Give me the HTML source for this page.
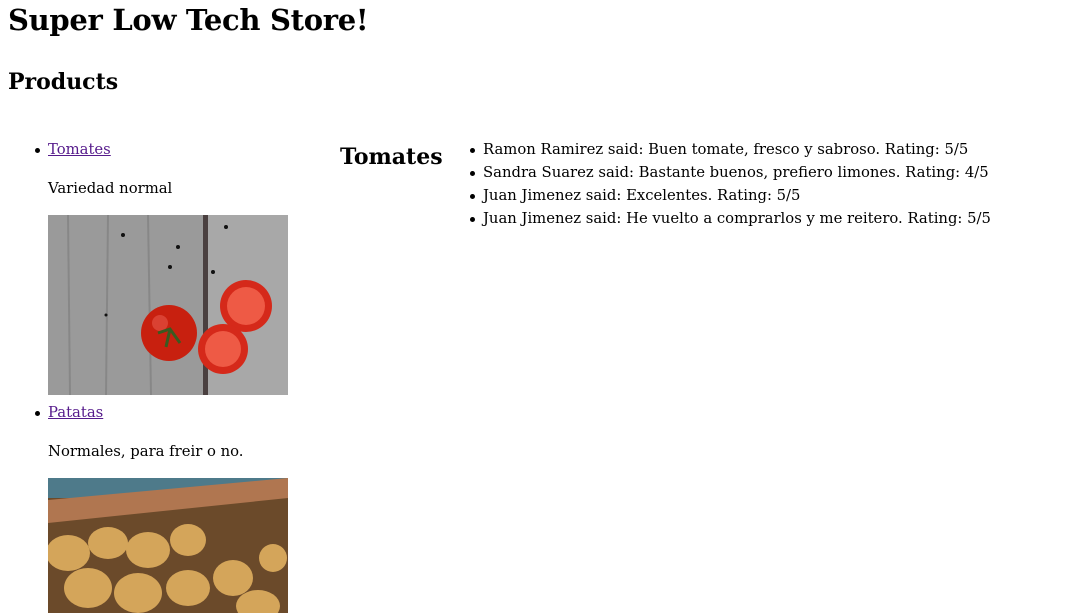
<!DOCTYPE html>
<html><head><meta charset="utf-8"><style>
body{margin:0;width:1083px;height:613px;overflow:hidden;background:#fff;font-family:"DejaVu Serif","Liberation Serif",serif;color:#000;position:relative}
.a{position:absolute;white-space:nowrap}
h1,h2{margin:0;font-weight:bold}
.t{font-size:14.8px;line-height:23px}
a{color:#551a8b;text-decoration:underline}
.b{position:absolute;width:5px;height:5px;border-radius:50%;background:#000}
</style></head><body>
<h1 class="a" style="left:8px;top:3px;font-size:29px;letter-spacing:-0.3px">Super Low Tech Store!</h1>
<h2 class="a" style="left:8px;top:69px;font-size:22px">Products</h2>

<div class="b" style="left:35px;top:148px"></div>
<div class="a t" style="left:48px;top:138px"><a>Tomates</a></div>
<div class="a t" style="left:48px;top:177px">Variedad normal</div>
<svg class="a" style="left:48px;top:215px" width="240" height="180">
<rect width="240" height="180" fill="#9a9a9a"/>
<g stroke="#7c7c7c" stroke-width="2" opacity=".6"><line x1="20" y1="0" x2="22" y2="180"/><line x1="60" y1="0" x2="58" y2="180"/><line x1="100" y1="0" x2="103" y2="180"/><line x1="190" y1="0" x2="188" y2="180"/></g>
<rect x="155" y="0" width="5" height="180" fill="#4a4040"/>
<rect x="160" y="0" width="80" height="180" fill="#a8a8a8"/>
<g fill="#111"><circle cx="75" cy="20" r="2"/><circle cx="130" cy="32" r="2"/><circle cx="178" cy="12" r="2"/><circle cx="122" cy="52" r="2"/><circle cx="58" cy="100" r="1.5"/><circle cx="165" cy="57" r="2"/></g>
<circle cx="121" cy="118" r="28" fill="#c8200f"/>
<circle cx="112" cy="108" r="8" fill="#e6584a" opacity=".6"/>
<path d="M110 118 l12 -4 l10 14 M122 114 l-4 18" stroke="#3a5a20" stroke-width="3" fill="none"/>
<circle cx="198" cy="91" r="26" fill="#d5291a"/><circle cx="198" cy="91" r="19" fill="#ee5a45"/>
<circle cx="175" cy="134" r="25" fill="#d5291a"/><circle cx="175" cy="134" r="18" fill="#ee5a45"/>
</svg>

<div class="b" style="left:35px;top:411px"></div>
<div class="a t" style="left:48px;top:401px"><a>Patatas</a></div>
<div class="a t" style="left:48px;top:440px">Normales, para freir o no.</div>
<svg class="a" style="left:48px;top:478px" width="240" height="135">
<rect width="240" height="135" fill="#6b4a2a"/>
<rect width="240" height="20" fill="#4e7a8a"/>
<path d="M0 22 L240 0 L240 20 L0 45Z" fill="#b07650"/>
<g fill="#d4a55a"><ellipse cx="20" cy="75" rx="22" ry="18"/><ellipse cx="60" cy="65" rx="20" ry="16"/><ellipse cx="100" cy="72" rx="22" ry="18"/><ellipse cx="140" cy="62" rx="18" ry="16"/><ellipse cx="40" cy="110" rx="24" ry="20"/><ellipse cx="90" cy="115" rx="24" ry="20"/><ellipse cx="140" cy="110" rx="22" ry="18"/><ellipse cx="185" cy="100" rx="20" ry="18"/><ellipse cx="210" cy="128" rx="22" ry="16"/><ellipse cx="225" cy="80" rx="14" ry="14"/></g>
</svg>

<h2 class="a" style="left:340px;top:144px;font-size:22px">Tomates</h2>
<div class="b" style="left:470px;top:148px"></div>
<div class="b" style="left:470px;top:171px"></div>
<div class="b" style="left:470px;top:194px"></div>
<div class="b" style="left:470px;top:217px"></div>
<div class="a t" style="left:483px;top:138px">Ramon Ramirez said: Buen tomate, fresco y sabroso. Rating: 5/5</div>
<div class="a t" style="left:483px;top:161px">Sandra Suarez said: Bastante buenos, prefiero limones. Rating: 4/5</div>
<div class="a t" style="left:483px;top:184px">Juan Jimenez said: Excelentes. Rating: 5/5</div>
<div class="a t" style="left:483px;top:207px">Juan Jimenez said: He vuelto a comprarlos y me reitero. Rating: 5/5</div>
</body></html>
